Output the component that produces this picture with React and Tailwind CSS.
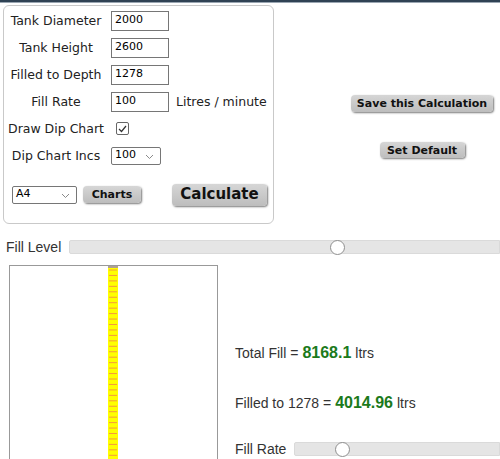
import React from "react";

const verdana = { fontFamily: '"DejaVu Sans", Verdana, sans-serif' };

function Chevron() {
  return (
    <svg width="9" height="6" viewBox="0 0 9 6" className="absolute right-[6px] top-[6px]">
      <path d="M1 1l3.5 3.5L8 1" fill="none" stroke="#8a8a8a" strokeWidth="1" />
    </svg>
  );
}

function Field({ value }) {
  return (
    <div className="w-[58px] h-[20px] border border-[#767676] bg-white px-[3px] flex items-center text-[11px] text-black">
      {value}
    </div>
  );
}

function Select({ value, width }) {
  return (
    <div
      className={`relative h-[18px] border border-[#767676] rounded-[2px] bg-white pl-[3px] flex items-center text-[11px] text-black ${width}`}
    >
      {value}
      <Chevron />
    </div>
  );
}

function GreyButton({ children, className = "" }) {
  return (
    <button
      className={`rounded-[4px] bg-gradient-to-b from-[#d6d6d6] to-[#bdbdbd] shadow-[1px_1px_2px_#7a7a7a] font-bold text-[#111] leading-none ${className}`}
      style={verdana}
    >
      {children}
    </button>
  );
}

function Slider({ thumbAt }) {
  return (
    <div className="relative flex-1 h-[14px] bg-[#e5e5e5] border border-[#dadada] rounded-l-[2px]">
      <div
        className="absolute top-[-1px] w-[15px] h-[15px] rounded-full bg-white border border-[#8f8f8f]"
        style={{ left: thumbAt }}
      />
    </div>
  );
}

function DipBar() {
  const ticks = [];
  for (let y = 4; y < 200; y += 5.45) ticks.push(y);
  return (
    <svg width="10" height="200" className="ml-[98px] block">
      <rect x="0" y="0" width="10" height="200" fill="#ffff00" />
      <rect x="0" y="0" width="10" height="2" fill="#b0a090" />
      {ticks.map((y, i) => (
        <line key={i} x1="1" x2="9" y1={y} y2={y} stroke="#f59a3c" strokeWidth="1" />
      ))}
    </svg>
  );
}

const rows = [
  { label: "Tank Diameter", value: "2000" },
  { label: "Tank Height", value: "2600" },
  { label: "Filled to Depth", value: "1278" },
  { label: "Fill Rate", value: "100", unit: "Litres / minute" },
];

export default function App() {
  return (
    <div className="w-[500px] h-[459px] overflow-hidden bg-white text-[#333]">
      <div className="h-[2px] bg-[#2f4254]" />
      <div className="h-[1px] bg-[#9aa6b2]" />

      <div className="flex">
        {/* Calculator panel */}
        <div
          className="ml-[3px] mt-[2px] w-[271px] h-[219px] pt-[1px] border border-[#c9c9c9] rounded-[6px] text-[12.5px] text-[#222]"
          style={verdana}
        >
          {rows.map((r) => (
            <div key={r.label} className="flex items-center h-[27px]">
              <div className="w-[104px] text-center whitespace-nowrap pt-[1px]">{r.label}</div>
              <div className="ml-[3px]">
                <Field value={r.value} />
              </div>
              {r.unit && <div className="ml-[7px] whitespace-nowrap pt-[1px]">{r.unit}</div>}
            </div>
          ))}
          <div className="flex items-center h-[27px]">
            <div className="w-[104px] text-center whitespace-nowrap pt-[1px]">Draw Dip Chart</div>
            <div className="ml-[8px] w-[13px] h-[13px] border border-[#666] rounded-[2px] flex items-center justify-center bg-white">
              <svg width="9" height="8" viewBox="0 0 9 8">
                <path d="M1 4l2.5 2.5L8 1" fill="none" stroke="#333" strokeWidth="1.2" />
              </svg>
            </div>
          </div>
          <div className="flex items-center h-[27px]">
            <div className="w-[104px] text-center whitespace-nowrap pt-[1px]">Dip Chart Incs</div>
            <div className="ml-[3px]">
              <Select value="100" width="w-[50px]" />
            </div>
          </div>
          <div className="flex items-center h-[27px] mt-[12px] pl-[8px]">
            <Select value="A4" width="w-[65px]" />
            <GreyButton className="ml-[6px] w-[58px] h-[17px] text-[11px]">Charts</GreyButton>
            <GreyButton className="ml-[31px] w-[95px] h-[22px] text-[15px]">Calculate</GreyButton>
          </div>
        </div>

        {/* Right buttons */}
        <div className="ml-[77px] mt-[92px] w-[142px] flex flex-col items-center">
          <GreyButton className="w-[142px] h-[17px] text-[11px]">Save this Calculation</GreyButton>
          <GreyButton className="mt-[30px] w-[85px] h-[16px] text-[11px]">Set Default</GreyButton>
        </div>
      </div>

      <div style={{ fontFamily: '"Liberation Sans", Arial, sans-serif' }} className="text-[14px]">
        {/* Fill level */}
        <div className="flex items-center mt-[16px] h-[14px]">
          <div className="ml-[6px] w-[63px]">Fill Level</div>
          <Slider thumbAt="260px" />
        </div>

        <div className="flex mt-[11px]">
          <div className="ml-[9px] w-[209px] h-[200px] border border-[#999] border-b-0">
            <DipBar />
          </div>
          <div className="ml-[17px] pt-[78px] flex-1">
            <div className="h-[20px] flex items-center">
              Total Fill = <b className="mx-[4px] text-[16px] text-[#1b7a1b]">8168.1</b> ltrs
            </div>
            <div className="h-[20px] mt-[30px] flex items-center">
              Filled to 1278 = <b className="mx-[4px] text-[16px] text-[#1b7a1b]">4014.96</b> ltrs
            </div>
            <div className="mt-[29px] flex items-center h-[14px]">
              <div className="w-[59px]">Fill Rate</div>
              <Slider thumbAt="40px" />
            </div>
          </div>
        </div>
      </div>
    </div>
  );
}
